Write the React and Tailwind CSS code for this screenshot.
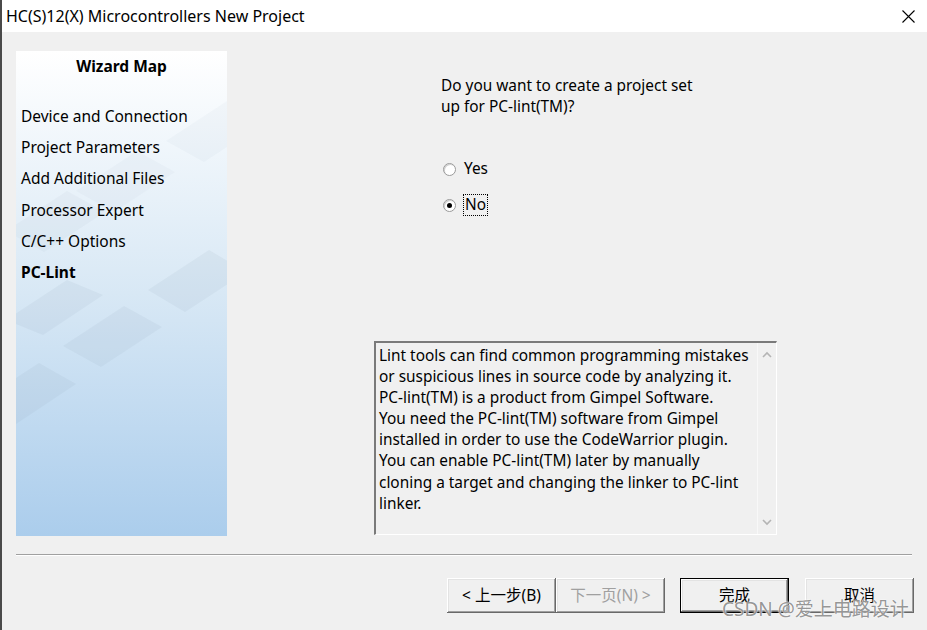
import React from 'react';

const steps = [
  'Device and Connection',
  'Project Parameters',
  'Add Additional Files',
  'Processor Expert',
  'C/C++ Options',
];

const lintText = [
  'Lint tools can find common programming mistakes',
  'or suspicious lines in source code by analyzing it.',
  'PC-lint(TM) is a product from Gimpel Software.',
  'You need the PC-lint(TM) software from Gimpel',
  'installed in order to use the CodeWarrior plugin.',
  'You can enable PC-lint(TM) later by manually',
  'cloning a target and changing the linker to PC-lint',
  'linker.',
];

const btnBase =
  'h-[35px] w-[109px] flex items-center justify-center text-[15.5px] bg-[#f0f0f0] shadow-[inset_-1px_-1px_#696969,inset_1px_1px_#ffffff,inset_-2px_-2px_#a0a0a0,inset_2px_2px_#e3e3e3]';

const Radio = ({ checked }) => (
  <div className="w-[13px] h-[13px] rounded-full border border-[#9a9a9a] bg-white flex items-center justify-center shadow-[inset_1px_1px_#d0d0d0]">
    {checked && <div className="w-[5px] h-[5px] rounded-full bg-black" />}
  </div>
);

const WizardPanel = () => (
  <div className="relative w-[211px] h-[485px] bg-gradient-to-b from-white via-[#d8e8f5] to-[#abcdec] overflow-hidden">
    {/* faint diamond pattern */}
    <svg className="absolute inset-0" width="211" height="485" viewBox="0 0 211 485">
      <g fill="#8a9bb0">
        <polygon opacity="0.05" points="60,140 121,100 159,121 98,161" />
        <polygon opacity="0.05" points="150,90 211,50 249,71 188,111" />
        <polygon opacity="0.06" points="-10,180 51,140 89,161 28,201" />
        <polygon opacity="0.1" points="-10,269 51,229 87,244 27,284" />
        <polygon opacity="0.1" points="47,295 108,255 146,276 85,316" />
        <polygon opacity="0.1" points="132,239 193,199 230,221 169,261" />
        <polygon opacity="0.1" points="-38,352 23,312 60,333 0,373" />
      </g>
    </svg>
    <div className="relative flex flex-col">
      <div className="h-[32px] flex items-center justify-center font-bold text-[15.5px] text-black">
        Wizard Map
      </div>
      <div className="flex flex-col pl-[5px] mt-[18px]">
        {steps.map((s) => (
          <div key={s} className="h-[31.2px] flex items-center text-[15.5px] text-black">
            {s}
          </div>
        ))}
        <div className="h-[31.2px] flex items-center text-[15.5px] font-bold text-black">PC-Lint</div>
      </div>
    </div>
  </div>
);

export default function App() {
  return (
    <div className="relative w-[927px] h-[630px] bg-[#f0f0f0] border-l-2 border-[#4a4a4a] flex flex-col font-['Noto_Sans','Noto_Sans_CJK_SC',sans-serif] text-black overflow-hidden">
      {/* title bar */}
      <div className="h-[32px] bg-white flex items-center justify-between pl-[4px] pr-[12px]">
        <span className="text-[16px] leading-none">HC(S)12(X) Microcontrollers New Project</span>
        <svg width="13" height="13" viewBox="0 0 13 13">
          <path d="M0.5 0.5 L12.5 12.5 M12.5 0.5 L0.5 12.5" stroke="#000" strokeWidth="1.1" />
        </svg>
      </div>

      {/* body */}
      <div className="flex pt-[19px] pl-[14px]">
        <WizardPanel />
        <div className="ml-[147px] w-[403px] flex flex-col">
          <div className="pl-[67px] mt-[24px] text-[15.4px] leading-[21px]">
            <div>Do you want to create a project set</div>
            <div>up for PC-lint(TM)?</div>
          </div>
          <div className="pl-[69px] mt-[41px] flex flex-col gap-[14px] text-[15.4px]">
            <div className="flex items-center gap-[7px] h-[22px]">
              <Radio />
              <span className="px-[1px]">Yes</span>
            </div>
            <div className="flex items-center gap-[7px] h-[22px]">
              <Radio checked />
              <span className="px-[1px] border border-dotted border-black leading-[20px]">No</span>
            </div>
          </div>

          {/* description box */}
          <div className="mt-[125px] h-[194px] w-[403px] flex border-t-2 border-l-2 border-t-[#7a7a7a] border-l-[#7a7a7a] border-b border-r border-b-white border-r-white">
            <div className="flex-1 pl-[3px] pt-[2px] text-[15.4px] leading-[21.1px] whitespace-nowrap">
              {lintText.map((l) => (
                <div key={l}>{l}</div>
              ))}
            </div>
            <div className="w-[19px] border-l border-[#f8f8f8] flex flex-col justify-between items-center py-[8px]">
              <svg width="10" height="7" viewBox="0 0 10 7">
                <path d="M1 6 L5 2 L9 6" stroke="#b4b4b4" strokeWidth="1.6" fill="none" />
              </svg>
              <svg width="10" height="7" viewBox="0 0 10 7">
                <path d="M1 1 L5 5 L9 1" stroke="#b4b4b4" strokeWidth="1.6" fill="none" />
              </svg>
            </div>
          </div>
        </div>
      </div>

      {/* separator */}
      <div className="ml-[14px] mt-[18px] w-[896px] border-t border-b border-t-[#a0a0a0] border-b-white" />

      {/* buttons */}
      <div className="flex mt-[22px] pl-[445px]">
        <div className={btnBase}>&lt; 上一步(B)</div>
        <div className={`${btnBase} text-[#a0a0a0]`}>下一页(N) &gt;</div>
        <div className={`${btnBase} ml-[15px] border border-black`}>完成</div>
        <div className={`${btnBase} ml-[16px]`}>取消</div>
      </div>

      {/* watermark */}
      <div className="absolute left-[720px] top-[600px] text-[19px] leading-none text-[#7a7a7a]/80 [text-shadow:0_0_2px_#fff,0_0_1px_#fff] whitespace-nowrap">
        CSDN @爱上电路设计
      </div>
    </div>
  );
}
